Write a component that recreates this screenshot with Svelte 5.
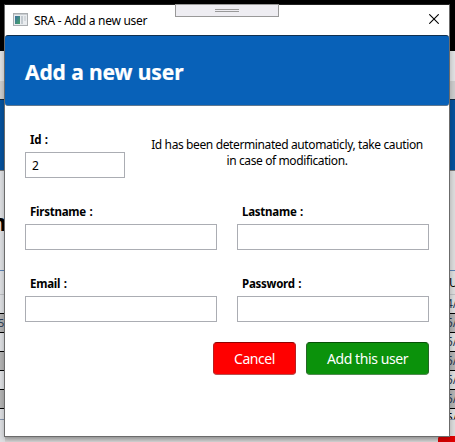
<script>
  let id = $state('2');
  let firstname = $state('');
  let lastname = $state('');
  let email = $state('');
  let password = $state('');
  const rows = ['4/', '5/', '5/', '5/', '5/'];
</script>

{#snippet backdrop(side, cells)}
  <div class="strip {side}">
    <div class="black"></div>
    <div class="toolbar"></div>
    <div class="shade"></div>
    <div class="banner"></div>
    <div class="space">{#if side === 'left'}<b>n</b>{/if}</div>
    <div class="head">{#if side === 'right'}U{/if}</div>
    {#each cells as cell, i}
      <div class="cell" class:grey={i % 2 === 1}>{cell}</div>
    {/each}
    <div class="cell grey">{#if side === 'right'}5/{/if}</div>
    <div class="last">{#if side === 'right'}5/{/if}</div>
    <div class="foot"></div>
  </div>
{/snippet}

<div class="screen">
  {@render backdrop('left', ['', '5', '', '', ''])}
  <div class="under"><i></i></div>
  {@render backdrop('right', rows)}

  <div class="window">
    <div class="titlebar">
      <svg class="app" width="15" height="13" viewBox="0 0 15 13">
        <defs>
          <linearGradient id="g" x1="0" y1="0" x2="1" y2="1">
            <stop offset="0" stop-color="#3b6fa0" /><stop offset="1" stop-color="#48a568" />
          </linearGradient>
        </defs>
        <rect x=".5" y=".5" width="14" height="12" fill="#e9ecef" stroke="#a9adb0" />
        <rect x="1" y="1" width="13" height="1" fill="#c9cdd1" />
        <rect x="2" y="3" width="5" height="8" fill="url(#g)" />
        <rect x="8" y="3" width="2" height="8" fill="#c3cad0" />
        <rect x="11" y="3" width="2" height="5" fill="#d3d8dc" />
      </svg>
      <span class="title">SRA - Add a new user</span>
      <svg class="close" width="10" height="10" viewBox="0 0 10 10">
        <path d="M.3.3l9.4 9.4M9.7.3L.3 9.7" stroke="#000" stroke-width="1.1" />
      </svg>
    </div>
    <div class="header"><h1>Add a new user</h1></div>
    <form>
      <div class="row">
        <div class="field small">
          <label for="id">Id :</label>
          <input id="id" bind:value={id} />
        </div>
        <p>Id has been determinated automaticly, take caution<br />in case of modification.</p>
      </div>
      <div class="row">
        <div class="field">
          <label for="fn">Firstname :</label>
          <input id="fn" bind:value={firstname} />
        </div>
        <div class="field">
          <label for="ln">Lastname :</label>
          <input id="ln" bind:value={lastname} />
        </div>
      </div>
      <div class="row">
        <div class="field">
          <label for="em">Email :</label>
          <input id="em" bind:value={email} />
        </div>
        <div class="field">
          <label for="pw">Password :</label>
          <input id="pw" type="password" bind:value={password} />
        </div>
      </div>
      <div class="actions">
        <button type="button" class="cancel">Cancel</button>
        <button type="button" class="add">Add this user</button>
      </div>
    </form>
  </div>
  <div class="grip"><i></i><i></i></div>
</div>

<style>
  :global(body) { margin: 0; }
  * { box-sizing: border-box; }
  .screen {
    position: relative; width: 455px; height: 442px; overflow: hidden; display: flex;
    background: #000; color: #000; font: 12px "Noto Sans", "Open Sans", sans-serif;
  }
  .strip { width: 5px; height: 442px; flex: none; overflow: hidden; display: flex; flex-direction: column; background: #dfe1e4; }
  .strip > div { flex: none; overflow: hidden; white-space: nowrap; }
  .right { background: #dedede; }
  .black { height: 51px; background: #000; }
  .toolbar { height: 30px; background: #e2e3e4; }
  .shade { height: 18px; background: #cecece; }
  .banner { height: 72px; background: #06529d; border-top: 1px solid #10273c; border-bottom: 1px solid #777; }
  .space { height: 99px; }
  .space b { display: block; margin: 36px 0 0 -9px; font-size: 24px; line-height: 30px; }
  .head { height: 25px; border-top: 1px solid #5c83b5; border-bottom: 1px solid #bfc1c5; line-height: 24px; }
  .right .head { text-indent: -1px; }
  .cell { height: 19px; border-bottom: 1px solid #000; line-height: 18px; color: #293850; }
  .left .cell { font-size: 11px; text-indent: -2px; }
  .right .cell, .last { text-indent: -4px; }
  .grey { background: #b5b5b5; }
  .last { height: 11px; border-bottom: 1px solid #8494ab; line-height: 18px; }
  .strip .foot { height: 22px; }
  .right .foot { border-bottom: 6px solid #e00000; }
  .under { flex: 1; align-self: flex-end; height: 6px; display: flex; justify-content: flex-end; background: linear-gradient(#b4b4b4, #d8d8d8); }
  .under i { width: 12px; background: #d90000; border-radius: 3px 0 0 0; }
  .window { position: absolute; left: 4px; top: 4px; width: 446px; height: 433px; background: #fff; border: 1px solid #6b6b6b; border-top-color: #222; box-shadow: 0 2px 6px rgba(0,0,0,.25); }
  .titlebar { height: 30px; display: flex; align-items: center; padding: 0 10px 0 8px; }
  .app { margin-top: -2px; }
  .title { margin-left: 6px; flex: 1; white-space: nowrap; letter-spacing: -.27px; }
  .close { margin-top: -2px; }
  .header { height: 71px; background: #0861b8; border-top: 1px solid #10304f; border-bottom: 1px solid #5f7890; border-radius: 3px; padding-left: 20px; display: flex; align-items: center; }
  h1 { margin: 3px 0 0; font-size: 21px; line-height: 28px; color: #fff; letter-spacing: -.1px; white-space: nowrap; -webkit-text-stroke: .2px #fff; }
  form { padding: 26px 20px 0; }
  .row { display: flex; gap: 20px; height: 72px; }
  .field { width: 192px; }
  .small { width: 100px; }
  label { display: block; height: 20px; padding-left: 5px; line-height: 16px; font-size: 11.5px; font-weight: 700; white-space: nowrap; letter-spacing: -.25px; word-spacing: .8px; }
  input { display: block; width: 100%; height: 26px; border: 1px solid #abadb3; padding: 0 6px; font: inherit; background: #fff; outline: 0; }
  p { margin: 5px 0 0; width: 284px; text-align: center; line-height: 16px; white-space: nowrap; letter-spacing: -.38px; }
  .actions { display: flex; justify-content: flex-end; gap: 10px; margin-top: -6px; }
  button { height: 33px; padding: 0; border: 1px solid; border-radius: 4px; color: #fff; font: 14px "Noto Sans", "Open Sans", sans-serif; letter-spacing: -.42px; white-space: nowrap; }
  .cancel { width: 83px; background: #f00; border-color: #900000 #b82020 #b85050 #b82020; }
  .add { width: 123px; background: #0b920b; border-color: #055005 #256625 #508b50 #256625; }
  .grip { position: absolute; left: 175px; top: 4px; width: 104px; height: 13px; background: #eeedf2; border: 1px solid #999; display: flex; flex-direction: column; align-items: center; gap: 1px; padding-top: 4px; }
  .grip i { width: 24px; height: 1px; background: #999; }
</style>
